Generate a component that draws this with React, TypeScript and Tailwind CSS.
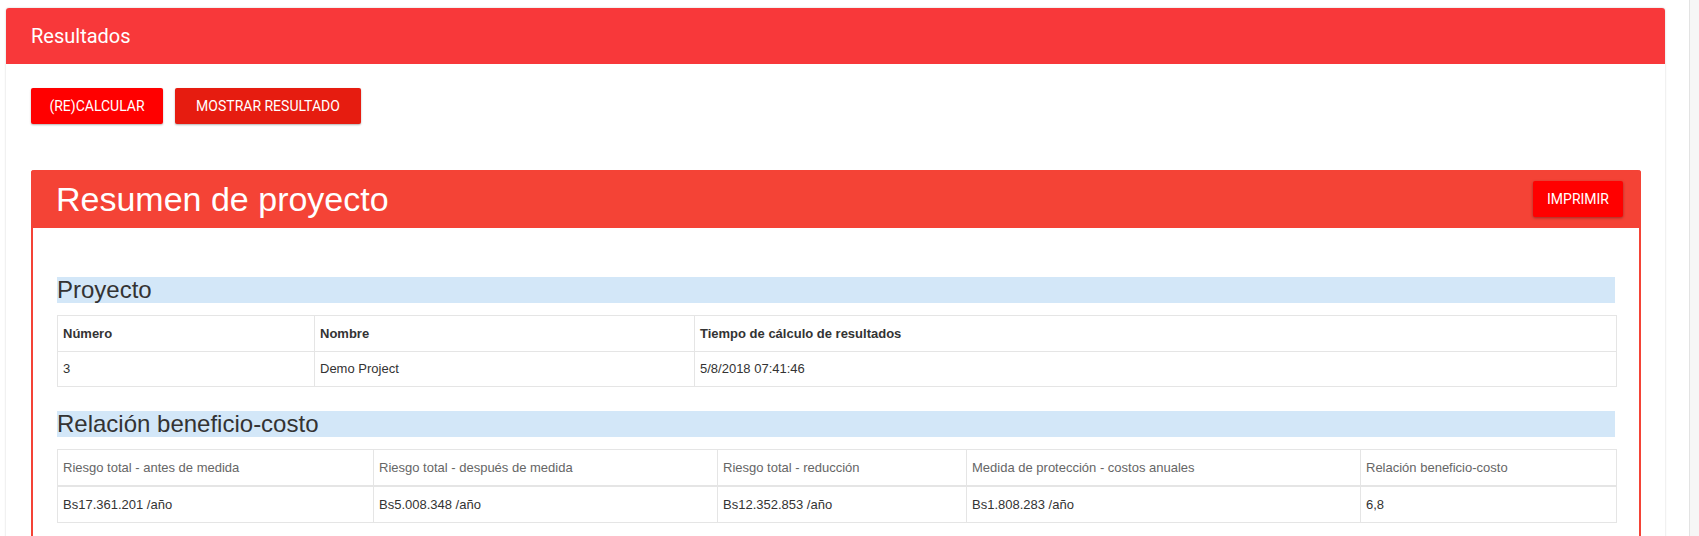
import React from "react";

const proyectoCols = [
  { title: "Número", value: "3", width: "w-[257px]" },
  { title: "Nombre", value: "Demo Project", width: "w-[380px]" },
  { title: "Tiempo de cálculo de resultados", value: "5/8/2018 07:41:46", width: "w-[922px]" },
];

const beneficioCols = [
  { title: "Riesgo total - antes de medida", value: "Bs17.361.201 /año", width: "w-[316px]" },
  { title: "Riesgo total - después de medida", value: "Bs5.008.348 /año", width: "w-[344px]" },
  { title: "Riesgo total - reducción", value: "Bs12.352.853 /año", width: "w-[249px]" },
  { title: "Medida de protección - costos anuales", value: "Bs1.808.283 /año", width: "w-[394px]" },
  { title: "Relación beneficio-costo", value: "6,8", width: "w-[256px]" },
];

function SectionTitle({ children }: { children: React.ReactNode }) {
  return (
    <h3 className="h-[26px] bg-[#d3e7f8] text-[24px] leading-[26px] text-[#333]">
      {children}
    </h3>
  );
}

export default function App() {
  return (
    <div className="flex min-h-screen bg-white font-['Liberation_Sans',Arial,sans-serif]">
      <div className="w-[1690px] shrink-0 border-r border-[#e3e3e3] pl-[6px] pr-6 pt-2">
        <div className="rounded-t-[3px] bg-white shadow-[0_0_2px_rgba(0,0,0,0.22)]">
          <div className="flex h-14 items-center rounded-t-[3px] bg-[#f8383a] pl-[25px] font-['Roboto',sans-serif] text-[20px] text-white">
            Resultados
          </div>

          <div className="pl-[25px] pr-6 pt-6">
            <div className="flex gap-3 font-['Roboto',sans-serif] text-[14px] text-white">
              <button className="h-9 w-[132px] rounded-[2px] bg-[#ff0000] shadow-[0_1px_2px_rgba(0,0,0,0.3)]">
                (RE)CALCULAR
              </button>
              <button className="h-9 w-[186px] rounded-[2px] bg-[#e61c10] shadow-[0_1px_2px_rgba(0,0,0,0.3)]">
                MOSTRAR RESULTADO
              </button>
            </div>

            <div className="mt-[46px] rounded-t-[3px] border-x-2 border-[#f44336] bg-white">
              <div className="-mx-[2px] flex h-[58px] items-center justify-between rounded-t-[3px] bg-[#f44336] pl-[25px] pr-[18px]">
                <h1 className="text-[34px] text-white">Resumen de proyecto</h1>
                <button className="h-9 w-[90px] rounded-[2px] bg-[#ff0000] font-['Roboto',sans-serif] text-[14px] text-white shadow-[0_1px_3px_rgba(0,0,0,0.35)]">
                  IMPRIMIR
                </button>
              </div>

              <div className="px-6 pb-10 pt-[49px] text-[13px] text-[#333]">
                <SectionTitle>Proyecto</SectionTitle>
                <table className="mt-3 w-full table-fixed border-collapse">
                  <thead>
                    <tr>
                      {proyectoCols.map((c) => (
                        <th
                          key={c.title}
                          className={`${c.width} border border-[#e5e5e5] px-[5px] py-[9px] text-left font-bold leading-[17px]`}
                        >
                          {c.title}
                        </th>
                      ))}
                    </tr>
                  </thead>
                  <tbody>
                    <tr>
                      {proyectoCols.map((c) => (
                        <td key={c.title} className="border border-[#e5e5e5] px-[5px] py-2 leading-[18px]">
                          {c.value}
                        </td>
                      ))}
                    </tr>
                  </tbody>
                </table>

                <div className="mt-6">
                  <SectionTitle>Relación beneficio-costo</SectionTitle>
                </div>
                <table className="mt-3 w-full table-fixed border-collapse">
                  <thead>
                    <tr>
                      {beneficioCols.map((c) => (
                        <th
                          key={c.title}
                          className={`${c.width} border border-b-2 border-[#e5e5e5] px-[5px] py-[9px] text-left font-normal leading-[17px] text-[#666]`}
                        >
                          {c.title}
                        </th>
                      ))}
                    </tr>
                  </thead>
                  <tbody>
                    <tr>
                      {beneficioCols.map((c) => (
                        <td key={c.title} className="border border-[#e5e5e5] px-[5px] py-[9px] leading-[17px]">
                          {c.value}
                        </td>
                      ))}
                    </tr>
                  </tbody>
                </table>
              </div>
            </div>
          </div>
        </div>
      </div>
      <div className="flex-1 bg-[#f6f6f6]" />
    </div>
  );
}
